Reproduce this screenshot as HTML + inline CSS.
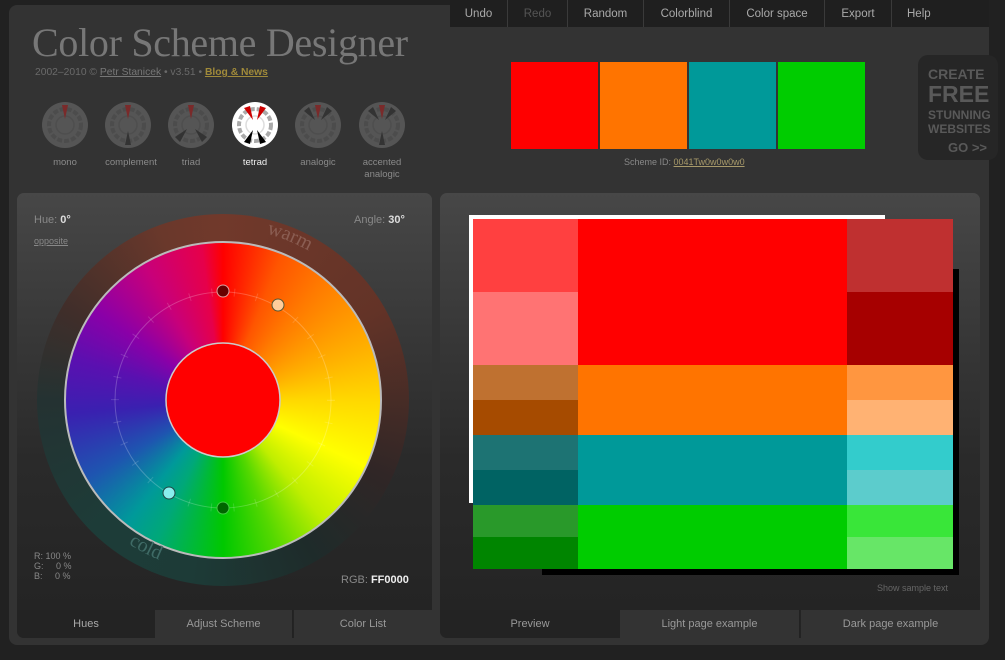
<!DOCTYPE html>
<html><head><meta charset="utf-8">
<style>
*{margin:0;padding:0;box-sizing:border-box}
body{width:1005px;height:660px;background:#212121;font-family:"Liberation Sans",sans-serif;position:relative;overflow:hidden;color:#888}
.abs{position:absolute}
#main{left:9px;top:5px;width:980px;height:640px;background:#333;border-radius:8px}
#title{left:32px;top:19px;font-family:"Liberation Serif",serif;font-size:40px;color:#777;letter-spacing:-0.3px}
#sub{left:35px;top:67px;font-size:10.3px;color:#6a6a6a}
#sub u{color:#777}
#sub b{color:#a08a3a;text-decoration:underline}
.lbl{font-size:9.5px;color:#8a8a8a;text-align:center;width:70px}
#menu{left:450px;top:0;width:539px;height:27px;background:#1f1f1f;display:flex}
#menu div{height:27px;line-height:29px;font-size:11.5px;color:#aaa;text-align:center;border-right:1px solid #3a3a3a}
.sw{top:62px;width:87px;height:87px}
#ad{left:918px;top:55px;width:80px;height:105px;background:#262626;border-radius:10px;color:#595959;font-weight:bold;padding-left:10px;line-height:1}
.panel{border-radius:7px;background:linear-gradient(#474747,#2a2a2a 60%,#232323)}
.tab{top:610px;height:28px;line-height:28px;font-size:11px;text-align:center;color:#999}
.c{position:absolute}
</style></head><body>
<div id="main" class="abs"></div>
<div id="title" class="abs">Color Scheme Designer</div>
<div id="sub" class="abs">2002–2010 © <u>Petr Stanicek</u> • v3.51 • <b>Blog &amp; News</b></div>

<svg class="abs" style="left:30px;top:95px" width="390" height="60">
 <defs>
  <g id="ic">
   <circle r="23" fill="#555"/>
   <circle r="16" fill="none" stroke="#4c4c4c" stroke-width="4" stroke-dasharray="5 2"/>
   <circle r="9" fill="none" stroke="#4e4e4e" stroke-width="1.5"/>
  </g>
 </defs>
 <g transform="translate(35,30)"><use href="#ic"/><path d="M-3,-20 L3,-20 L0,-6Z" fill="#7a2a2a"/></g>
 <g transform="translate(98,30)"><use href="#ic"/><path d="M-3,-20 L3,-20 L0,-6Z" fill="#7a2a2a"/><path d="M-3,20 L3,20 L0,6Z" fill="#333"/></g>
 <g transform="translate(161,30)"><use href="#ic"/><path d="M-3,-20 L3,-20 L0,-6Z" fill="#7a2a2a"/><path d="M-16,12 L-11,17 L-4,4Z M16,12 L11,17 L4,4Z" fill="#333"/></g>
 <g transform="translate(225,30)"><circle r="23" fill="#fff"/>
  <circle r="16" fill="none" stroke="#aaa" stroke-width="4" stroke-dasharray="5 2"/>
  <circle r="9" fill="none" stroke="#ddd" stroke-width="1.5"/>
  <path d="M-11,-17 L-5,-19 L-2,-5Z M11,-17 L5,-19 L2,-5Z" fill="#c00"/>
  <path d="M-11,17 L-5,19 L-2,5Z M11,17 L5,19 L2,5Z" fill="#000"/></g>
 <g transform="translate(288,30)"><use href="#ic"/><path d="M-3,-20 L3,-20 L0,-6Z" fill="#7a2a2a"/><path d="M-14,-14 L-9,-18 L-3,-5Z M14,-14 L9,-18 L3,-5Z" fill="#333"/></g>
 <g transform="translate(352,30)"><use href="#ic"/><path d="M-3,-20 L3,-20 L0,-6Z" fill="#7a2a2a"/><path d="M-14,-14 L-9,-18 L-3,-5Z M14,-14 L9,-18 L3,-5Z M-3,20 L3,20 L0,6Z" fill="#333"/></g>
</svg>
<div class="abs lbl" style="left:30px;top:157px">mono</div>
<div class="abs lbl" style="left:96px;top:157px">complement</div>
<div class="abs lbl" style="left:156px;top:157px">triad</div>
<div class="abs lbl" style="left:220px;top:157px;color:#eee">tetrad</div>
<div class="abs lbl" style="left:283px;top:157px">analogic</div>
<div class="abs lbl" style="left:347px;top:157px;line-height:12px">accented<br>analogic</div>

<div id="menu" class="abs">
 <div style="width:58px">Undo</div><div style="width:60px;color:#555">Redo</div><div style="width:76px">Random</div><div style="width:86px">Colorblind</div><div style="width:95px">Color space</div><div style="width:67px">Export</div><div style="width:97px;border:none;text-align:left;padding-left:15px">Help</div>
</div>
<div class="abs sw" style="left:511px;background:#f00"></div>
<div class="abs sw" style="left:600px;background:#ff7400"></div>
<div class="abs sw" style="left:689px;background:#009999"></div>
<div class="abs sw" style="left:778px;background:#00cc00"></div>
<div class="abs" style="left:624px;top:157px;font-size:9px;color:#888">Scheme ID: <u style="color:#a89a6a">0041Tw0w0w0w0</u></div>
<div id="ad" class="abs"><div style="font-size:14px;margin-top:12px">CREATE</div><div style="font-size:23px;margin-top:2px">FREE</div><div style="font-size:12px;margin-top:3px">STUNNING</div><div style="font-size:12px;margin-top:2px">WEBSITES</div><div style="font-size:13px;margin-top:6px;padding-left:20px">GO &gt;&gt;</div></div>

<!-- left panel -->
<div class="abs panel" style="left:17px;top:193px;width:415px;height:445px"></div>
<div class="abs" style="left:34px;top:214px;font-size:11px;color:#888">Hue: <b style="color:#ddd">0°</b></div>
<div class="abs" style="left:34px;top:236px;font-size:9px;color:#888;text-decoration:underline">opposite</div>
<div class="abs" style="left:354px;top:214px;font-size:11px;color:#888">Angle: <b style="color:#ddd">30°</b></div>
<div class="abs" style="left:34px;top:551px;font-size:9px;color:#888;line-height:10px;white-space:pre">R: 100 %
G:     0 %
B:     0 %</div>
<div class="abs" style="left:341px;top:574px;font-size:11px;color:#888">RGB: <b style="color:#eee">FF0000</b></div>

<div class="c" style="left:37px;top:214px;width:372px;height:372px;border-radius:50%;background:conic-gradient(#71392b 0deg,#633327 60deg,#302626 115deg,#1e2b2a 150deg,#1d3b37 190deg,#1d3c38 225deg,#243232 270deg,#402e2a 300deg,#6a382b 340deg,#71392b 360deg)"></div>
<div class="c" style="left:64px;top:241px;width:318px;height:318px;border-radius:50%;border:2px solid #bbb;background:conic-gradient(#ff0000 0deg,#ff5500 22deg,#ff7a00 40deg,#ffb000 70deg,#ffd800 90deg,#ffff00 115deg,#bfee00 140deg,#55d800 160deg,#00c800 180deg,#00a878 205deg,#00999a 218deg,#1e55b0 240deg,#3a20b0 265deg,#5a10b0 285deg,#8a00a8 305deg,#c8007a 330deg,#e6004a 352deg,#ff0000 360deg)"></div>
<svg class="c" style="left:37px;top:214px" width="372" height="372">
 <circle cx="186" cy="186" r="108" fill="none" stroke="rgba(255,255,255,0.22)" stroke-width="1"/>
 <circle cx="186" cy="186" r="108" fill="none" stroke="rgba(255,255,255,0.15)" stroke-width="8" stroke-dasharray="1 21.6"/>
 <circle cx="186" cy="186" r="57" fill="#f00" stroke="#ccc" stroke-width="1.5"/>
 <circle cx="186" cy="77" r="6" fill="#600" stroke="#e0a0a0" stroke-width="1"/>
 <circle cx="241" cy="91" r="6" fill="#fc9" stroke="#553" stroke-width="1"/>
 <circle cx="132" cy="279" r="6" fill="#8ee" stroke="#244" stroke-width="1"/>
 <circle cx="186" cy="294" r="6" fill="#060" stroke="#4c4" stroke-width="1"/>
 <path id="wp" d="M186,14 A172,172 0 0 1 358,186" fill="none"/>
 <path id="cp" d="M14,186 A172,172 0 0 0 186,358" fill="none"/>
 <text font-family="Liberation Serif,serif" font-size="20" fill="#8a5d52"><textPath href="#wp" startOffset="44">warm</textPath></text>
 <text font-family="Liberation Serif,serif" font-size="20" fill="#3f6b66"><textPath href="#cp" startOffset="170">cold</textPath></text>
</svg>
<div class="abs tab" style="left:17px;width:138px;background:#232323;color:#aaa;border-bottom-left-radius:7px">Hues</div>
<div class="abs tab" style="left:155px;width:138px;background:#333;border-right:1px solid #222">Adjust Scheme</div>
<div class="abs tab" style="left:294px;width:138px;background:#333">Color List</div>

<!-- right panel -->
<div class="abs panel" style="left:440px;top:193px;width:540px;height:445px"></div>
<div class="abs" style="left:469px;top:215px;width:416px;height:288px;background:#fff"></div>
<div class="abs" style="left:542px;top:269px;width:417px;height:306px;background:#000"></div>
<div class="abs" style="left:473px;top:219px;width:480px;height:350px">
 <div class="c" style="left:0;top:0;width:105px;height:73px;background:#ff4040"></div>
 <div class="c" style="left:0;top:73px;width:105px;height:73px;background:#ff7373"></div>
 <div class="c" style="left:105px;top:0;width:269px;height:146px;background:#f00"></div>
 <div class="c" style="left:374px;top:0;width:106px;height:73px;background:#bf3030"></div>
 <div class="c" style="left:374px;top:73px;width:106px;height:73px;background:#a60000"></div>
 <div class="c" style="left:0;top:146px;width:105px;height:35px;background:#bf7130"></div>
 <div class="c" style="left:0;top:181px;width:105px;height:35px;background:#a64b00"></div>
 <div class="c" style="left:105px;top:146px;width:269px;height:70px;background:#ff7400"></div>
 <div class="c" style="left:374px;top:146px;width:106px;height:35px;background:#ff9640"></div>
 <div class="c" style="left:374px;top:181px;width:106px;height:35px;background:#ffb273"></div>
 <div class="c" style="left:0;top:216px;width:105px;height:35px;background:#1d7373"></div>
 <div class="c" style="left:0;top:251px;width:105px;height:35px;background:#006363"></div>
 <div class="c" style="left:105px;top:216px;width:269px;height:70px;background:#009999"></div>
 <div class="c" style="left:374px;top:216px;width:106px;height:35px;background:#33cccc"></div>
 <div class="c" style="left:374px;top:251px;width:106px;height:35px;background:#5ccccc"></div>
 <div class="c" style="left:0;top:286px;width:105px;height:32px;background:#29992a"></div>
 <div class="c" style="left:0;top:318px;width:105px;height:32px;background:#008500"></div>
 <div class="c" style="left:105px;top:286px;width:269px;height:64px;background:#00cc00"></div>
 <div class="c" style="left:374px;top:286px;width:106px;height:32px;background:#39e639"></div>
 <div class="c" style="left:374px;top:318px;width:106px;height:32px;background:#67e667"></div>
</div>
<div class="abs" style="left:877px;top:583px;font-size:9px;color:#666">Show sample text</div>
<div class="abs tab" style="left:440px;width:180px;background:#232323;color:#999;border-bottom-left-radius:7px">Preview</div>
<div class="abs tab" style="left:620px;width:180px;background:#333;border-right:1px solid #222">Light page example</div>
<div class="abs tab" style="left:801px;width:179px;background:#333">Dark page example</div>
</body></html>
